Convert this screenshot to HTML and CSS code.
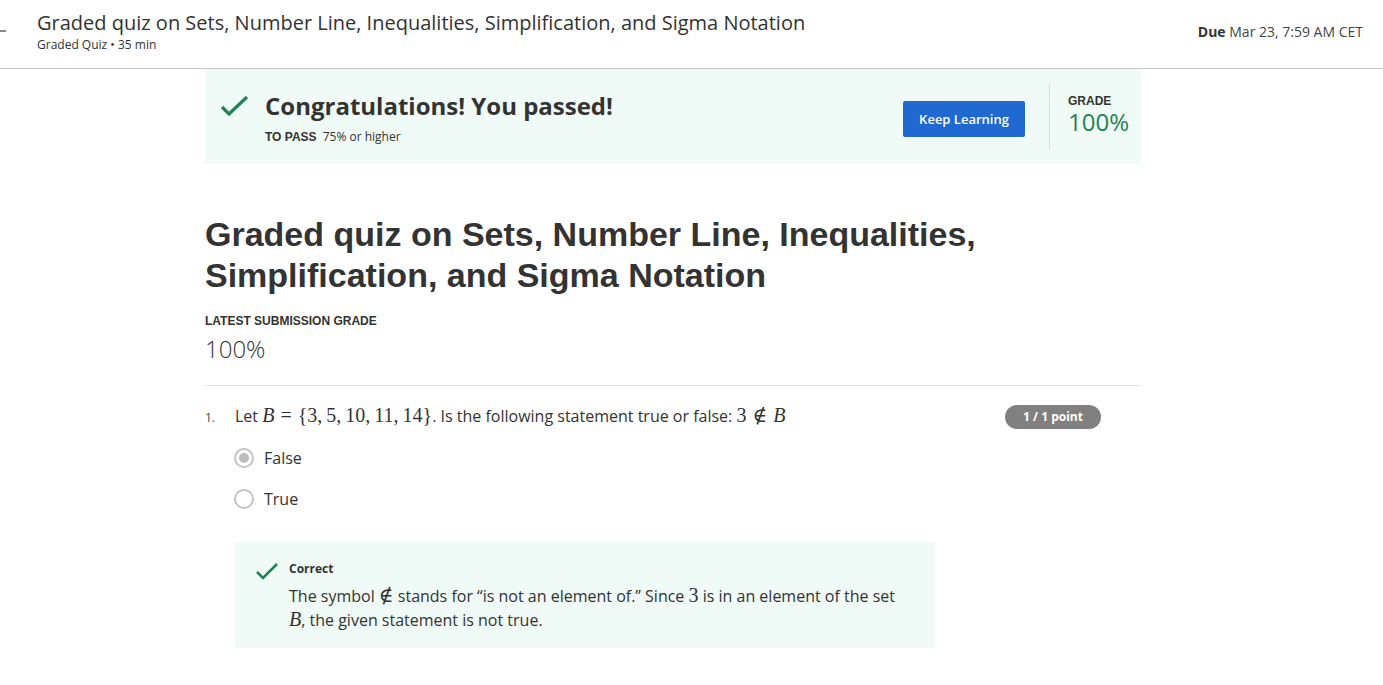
FILE: index.html
```html
<!DOCTYPE html>
<html lang="en">
<head>
<meta charset="utf-8">
<title>Graded quiz</title>
<link rel="stylesheet" href="styles.css">
</head>
<body>
<header class="topbar">
  <span class="back-stub"></span>
  <div class="topbar-text">
    <h1 class="topbar-title">Graded quiz on Sets, Number Line, Inequalities, Simplification, and Sigma Notation</h1>
    <div class="topbar-sub">Graded Quiz • 35 min</div>
  </div>
  <div class="due"><b>Due</b> Mar 23, 7:59 AM CET</div>
</header>
<main class="content">
  <section class="banner">
    <svg class="banner-check" width="30" height="24" viewBox="0 0 30 24"><path d="M2 13 L9 20 L27 3" fill="none" stroke="#1f8354" stroke-width="3.2"/></svg>
    <div class="banner-text">
      <div class="banner-title">Congratulations! You passed!</div>
      <div class="banner-sub"><span class="label">TO PASS</span> 75% or higher</div>
    </div>
    <button class="keep-btn">Keep Learning</button>
    <div class="banner-grade">
      <div class="label grade-label">GRADE</div>
      <div class="grade-val">100%</div>
    </div>
  </section>

  <h2 class="quiz-title">Graded quiz on Sets, Number Line, Inequalities, Simplification, and Sigma Notation</h2>
  <div class="label latest">LATEST SUBMISSION GRADE</div>
  <div class="latest-val">100%</div>
  <hr class="divider">

  <section class="question">
    <div class="q-row">
      <span class="q-num">1.</span>
      <div class="q-text">Let <span class="m"><i>B</i><span class="rel">=</span>{3,&thinsp;5,&thinsp;10,&thinsp;11,&thinsp;14}</span>. Is the following statement true or false: <span class="m">3<span class="rel">∉</span><i>B</i></span></div>
      <span class="points">1 / 1 point</span>
    </div>
    <div class="options">
      <label class="opt"><span class="radio checked"></span>False</label>
      <label class="opt"><span class="radio"></span>True</label>
    </div>
    <div class="feedback">
      <svg class="fb-check" width="24" height="20" viewBox="0 0 24 20"><path d="M2 10 L8 16 L22 2" fill="none" stroke="#1f8354" stroke-width="2.6"/></svg>
      <div class="fb-body">
        <div class="fb-title">Correct</div>
        <p class="fb-text">The symbol <span class="m">∉</span> stands for “is not an element of.” Since <span class="m">3</span> is in an element of the set <span class="m"><i>B</i></span>, the given statement is not true.</p>
      </div>
    </div>
  </section>
</main>
</body>
</html>
```
FILE: styles.css
```css
* { box-sizing: border-box; }
html, body { margin: 0; padding: 0; background: #fff; }
body { font-family: "Open Sans", "Liberation Sans", sans-serif; color: #333; }

.topbar {
  display: flex;
  align-items: flex-start;
  height: 69px;
  border-bottom: 1px solid #c9c9c9;
  position: relative;
}
.back-stub {
  position: absolute;
  left: 0; top: 30px;
  width: 6px; height: 2px;
  background: #888;
}
.topbar-text { padding: 9px 0 0 37px; flex: 1; }
.topbar-title {
  margin: 0;
  font-size: 20px;
  font-weight: 400;
  line-height: 27px;
  color: #333;
}
.topbar-sub { font-size: 12px; line-height: 16px; margin-top: 1px; color: #333; }
.due { padding: 22px 20px 0 0; font-size: 14px; color: #444; }
.due b { font-weight: 700; color: #333; }

.content { margin-left: 205px; width: 936px; }

.label {
  font-family: "Liberation Sans", Arial, sans-serif;
  font-weight: 700;
  font-size: 12px;
  color: #333;
}

.banner {
  display: flex;
  align-items: flex-start;
  height: 95px;
  background: #f0faf6;
  padding: 0 0 0 15px;
}
.banner-check { margin-top: 25px; }
.banner-text { margin-left: 15px; padding-top: 21px; flex: 1; }
.banner-title { font-size: 24px; font-weight: 700; line-height: 32px; color: #333; }
.banner-sub { font-size: 12px; margin-top: 6px; color: #333; }
.banner-sub .label { margin-right: 3px; }
.keep-btn {
  margin-top: 32px;
  width: 122px; height: 36px;
  background: #1f69d0;
  color: #fff;
  border: none;
  border-radius: 2px;
  font-family: "Open Sans", sans-serif;
  font-size: 13px;
  font-weight: 600;
}
.banner-grade {
  margin: 14px 0 14px 24px;
  border-left: 1px solid #d5dcd9;
  padding: 12px 0 0 18px;
  width: 92px;
  height: 67px;
}
.grade-label { line-height: 13px; }
.grade-val { font-size: 24px; color: #1f8354; line-height: 26px; margin-top: 1px; }

.quiz-title {
  font-family: "Liberation Sans", Arial, sans-serif;
  font-weight: 700;
  font-size: 34px;
  line-height: 41px;
  margin: 50px 0 0 0;
  color: #333;
}
.latest { margin-top: 18px; }
.latest-val { font-size: 24px; font-weight: 300; margin-top: 6px; line-height: 30px; color: #333; }
.divider { border: none; border-top: 1px solid #e1e1e1; margin: 21px 0 0 0; }

.question { padding-top: 19px; }
.q-row { display: flex; align-items: flex-start; }
.q-num { font-size: 12px; width: 30px; padding-top: 4px; color: #444; }
.q-text { font-size: 16px; line-height: 22px; flex: 1; color: #333; }
.m { font-family: "Liberation Serif", "DejaVu Serif", serif; font-size: 20px; line-height: 1; }
.rel { margin: 0 6px; }
.points {
  margin-right: 40px;
  margin-top: 0;
  background: #808080;
  color: #fff;
  font-size: 12px;
  font-weight: 700;
  border-radius: 12px;
  width: 96px;
  height: 24px;
  line-height: 24px;
  text-align: center;
}
.options { padding-left: 29px; margin-top: 18px; }
.opt { display: flex; align-items: center; height: 22px; font-size: 16px; margin-bottom: 19px; color: #333; }
.radio {
  width: 20px; height: 20px;
  border-radius: 50%;
  border: 2px solid #c4c4c4;
  margin-right: 10px;
  position: relative;
  flex: none;
}
.radio.checked::after {
  content: "";
  position: absolute;
  left: 3px; top: 3px;
  width: 10px; height: 10px;
  border-radius: 50%;
  background: #bdbdbd;
}
.feedback {
  margin: 32px 0 0 30px;
  width: 700px;
  background: #f0faf6;
  display: flex;
  align-items: flex-start;
  padding: 18px 20px 16px 20px;
  min-height: 105px;
}
.fb-check { margin-top: 2px; }
.fb-body { margin-left: 10px; width: 610px; }
.fb-title { font-size: 12px; font-weight: 700; line-height: 18px; color: #333; }
.fb-text { margin: 6px 0 0 0; font-size: 16px; line-height: 24px; color: #333; }
```
